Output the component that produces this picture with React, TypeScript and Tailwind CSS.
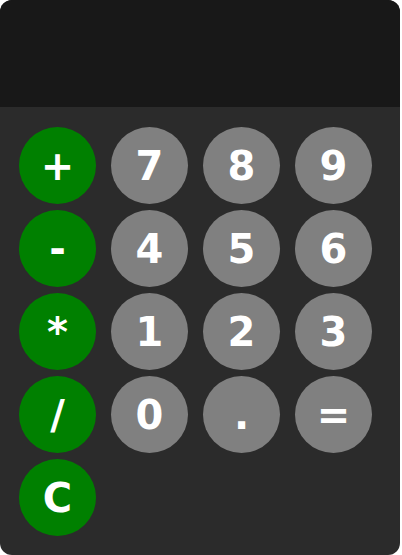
export default function App() {
  const rows = [
    ["+", "7", "8", "9"],
    ["-", "4", "5", "6"],
    ["*", "1", "2", "3"],
    ["/", "0", ".", "="],
    ["C"],
  ];
  const ops = ["+", "-", "*", "/", "C"];

  return (
    <div className="w-[400px] h-[555px] rounded-[12px] overflow-hidden bg-[#2b2b2b] flex flex-col" style={{ fontFamily: '"DejaVu Sans", Verdana, sans-serif' }}>
      {/* Display */}
      <div className="h-[107px] bg-[#181818] shrink-0"></div>

      {/* Keypad */}
      <div className="pt-[20px] pl-[19px] grid grid-cols-[repeat(4,77px)] gap-x-[15px] gap-y-[6px]">
        {rows.flat().map((key, i) => (
          <button
            key={i}
            className={
              ops.includes(key)
                ? "w-[77px] h-[77px] rounded-full bg-[#008000] text-white font-bold text-[40px] leading-none flex items-center justify-center"
                : "w-[77px] h-[77px] rounded-full bg-[#808080] text-white font-bold text-[40px] leading-none flex items-center justify-center"
            }
          >
            {key}
          </button>
        ))}
      </div>
    </div>
  );
}
